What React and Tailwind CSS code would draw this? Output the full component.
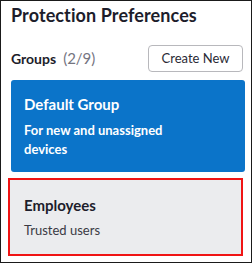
import React from 'react'

function App() {
  return (
    <div className="w-[252px] h-[263px] border border-[#1a1a1a] bg-white px-[10px] font-['Lato',sans-serif] text-[#1d1d2b]">
      <h1 className="pt-[2px] text-[18px] font-bold leading-[24px] tracking-[0.1px]">Protection Preferences</h1>

      <div className="mt-[18px] flex items-center justify-between">
        <div className="text-[14px] leading-[20px]">
          <span className="font-bold">Groups</span>
          <span className="ml-[7px] text-[15px] text-[#75757f]">(2/9)</span>
        </div>
        <button className="h-[27px] w-[95px] mr-[-2px] rounded-[4px] border border-[#b8b8bc] text-[13px] text-[#2a2a35]">
          Create New
        </button>
      </div>

      <div className="mt-[8px] h-[92px] w-[234px] rounded-[3px] bg-[#0b74c9] pl-[13px] pt-[14px] text-white">
        <div className="text-[15px] font-bold leading-[20px]">Default Group</div>
        <div className="mt-[7px] w-[150px] text-[13px] font-bold leading-[19px]">
          For new and unassigned devices
        </div>
      </div>

      <div className="mt-[6px] ml-[-3px] h-[78px] w-[235px] border-2 border-[#f01414] bg-[#ebecee] pl-[14px] pt-[15px]">
        <div className="text-[15px] font-bold leading-[20px]">Employees</div>
        <div className="mt-[6px] text-[13px] leading-[18px] text-[#3a3a44]">Trusted users</div>
      </div>
    </div>
  )
}

export default App
